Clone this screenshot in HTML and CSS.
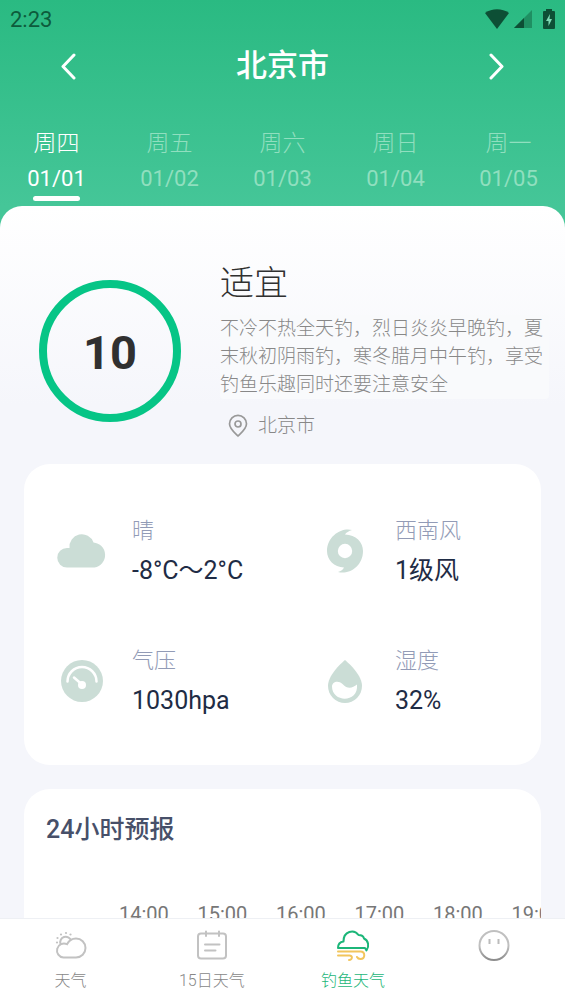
FILE: index.html
```html
<!DOCTYPE html>
<html lang="zh-CN">
<head>
<meta charset="utf-8">
<meta name="viewport" content="width=device-width, initial-scale=1">
<title>钓鱼天气</title>
<link rel="stylesheet" href="styles.css">
</head>
<body>
<div class="app">
  <header class="header">
    <div class="status">
      <span>2:23</span>
      <div class="status-icons">
        <svg width="24" height="20" viewBox="0 0 24 20"><path d="M0 4C7-1 17-1 24 4L12 20Z" fill="#0d4f35"/></svg>
        <svg width="18" height="18" viewBox="0 0 18 18"><path d="M18 0V18H0Z" fill="#1f8f62"/><path d="M10 8V18H0Z" fill="#0d4f35"/></svg>
        <svg class="battery" width="12" height="20" viewBox="0 0 12 20"><path d="M3 0h6v2h2q1 0 1 1v16q0 1-1 1H1q-1 0-1-1V3q0-1 1-1h2z" fill="#0d4f35"/><path d="M7 5L3 12h2.500v5L9 10H6.500z" fill="#7fd9b4"/></svg>
      </div>
    </div>
    <div class="city-bar">
      <button class="arrow" aria-label="上一个城市"><svg width="16" height="28" viewBox="0 0 16 28"><path d="M14 3L3 14.500L14 26"/></svg></button>
      <h1 class="city">北京市</h1>
      <button class="arrow" aria-label="下一个城市"><svg width="16" height="28" viewBox="0 0 16 28"><path d="M2 3L13 14.500L2 26"/></svg></button>
    </div>
    <nav class="days">
      <button class="day active"><span class="week">周四</span><span class="date">01/01</span></button>
      <button class="day"><span class="week">周五</span><span class="date">01/02</span></button>
      <button class="day"><span class="week">周六</span><span class="date">01/03</span></button>
      <button class="day"><span class="week">周日</span><span class="date">01/04</span></button>
      <button class="day"><span class="week">周一</span><span class="date">01/05</span></button>
    </nav>
  </header>

  <main class="sheet">
    <section class="summary">
      <div class="score">10</div>
      <div class="advice">
        <h2 class="advice-title">适宜</h2>
        <p class="advice-text">不冷不热全天钓，烈日炎炎早晚钓，夏末秋初阴雨钓，寒冬腊月中午钓，享受钓鱼乐趣同时还要注意安全</p>
        <div class="place">
          <svg width="20" height="24" viewBox="0 0 20 24" fill="none" stroke="#999" stroke-width="1.700"><path d="M10 22C7 19 1.500 15 1.500 9.800a8.500 8.500 0 0 1 17 0C18.500 15 13 19 10 22Z"/><circle cx="10" cy="10" r="3"/></svg>
          <span>北京市</span>
        </div>
      </div>
    </section>

    <section class="card metrics">
      <div class="metric">
        <svg width="52" height="52" viewBox="0 0 52 52"><path d="M11 42.500a9.700 9.700 0 0 1 0-19.500h2.500a12.400 12.400 0 0 1 24-5.500A12.600 12.600 0 0 1 38.500 42.500Z" fill="#cbddd6"/></svg>
        <dl><dt>晴</dt><dd>-8°C～2°C</dd></dl>
      </div>
      <div class="metric">
        <svg width="52" height="52" viewBox="0 0 52 52"><path d="M33 5C24 2 8 10 8 26c0 9 7 16 17 16.500-1 2-3 3.500-6 4.500C29 50 44 42 44 26 44 17 37 10 26 9.500c1-2 4-3.500 7-4.500Z" fill="#cbddd6"/><circle cx="26" cy="26" r="7.200" fill="#fff"/></svg>
        <dl><dt>西南风</dt><dd>1级风</dd></dl>
      </div>
      <div class="metric">
        <svg width="52" height="52" viewBox="0 0 52 52"><circle cx="26" cy="26" r="21" fill="#cbddd6"/><path d="M11.500 26.500a14.500 14.500 0 0 1 29 0" fill="none" stroke="#fff" stroke-width="2.500" stroke-linecap="round"/><path d="M18 22.500L26 29.500" stroke="#fff" stroke-width="2.500" stroke-linecap="round"/><circle cx="26" cy="30" r="4" fill="#fff"/></svg>
        <dl><dt>气压</dt><dd>1030hpa</dd></dl>
      </div>
      <div class="metric">
        <svg width="52" height="52" viewBox="0 0 52 52"><path d="M26 5C20 10 9 21 9 31a17 17 0 0 0 34 0C43 21 32 10 26 5Z" fill="#cbddd6"/><path d="M13 31.500c0-4.500 6-7 10.500-2.500 5.500 6 10 4 14.500.500C40 48 13 48 13 31.500Z" fill="#fff"/></svg>
        <dl><dt>湿度</dt><dd>32%</dd></dl>
      </div>
    </section>

    <section class="card forecast">
      <h2 class="forecast-title">24小时预报</h2>
      <div class="hours"><span>14:00</span><span>15:00</span><span>16:00</span><span>17:00</span><span>18:00</span><span>19:00</span></div>
    </section>
  </main>

  <nav class="tabbar">
    <a class="tab" href="#weather">
      <svg width="36" height="36" viewBox="0 0 36 36" fill="none" stroke="#c2c2c2" stroke-width="2"><path d="M10.500 30.500A7 7 0 1 1 14 17.200C16.500 12.500 20 11.500 23 11.500a9.500 9.500 0 0 1 0 19Z"/><path d="M7.500 17a5.300 5.300 0 0 1 10.500-3.500"/><g fill="#c2c2c2" stroke="none"><circle cx="4" cy="15.500" r="1.100"/><circle cx="4.500" cy="11" r="1.100"/><circle cx="8" cy="7.500" r="1.100"/><circle cx="13" cy="6" r="1.100"/><circle cx="17.500" cy="7.500" r="1.100"/></g></svg>
      <span>天气</span>
    </a>
    <a class="tab" href="#days">
      <svg width="36" height="36" viewBox="0 0 36 36" fill="none" stroke="#c2c2c2" stroke-width="2" stroke-linecap="round"><rect x="4" y="6.500" width="28" height="25" rx="3"/><path d="M12 4.500v4.500M25 4.500v4.500M11 17.500h14.500M11 23.500h10.500"/></svg>
      <span>15日天气</span>
    </a>
    <a class="tab active" href="#fishing">
      <svg width="36" height="36" viewBox="0 0 36 36" fill="none" stroke-width="2" stroke-linecap="round" stroke-linejoin="round"><path stroke="#1cb679" d="M31.500 23.500L30 21H3C3 17.500 5 15 8.500 14.500 8.500 4 19 2 23.500 8c3 0 5 1 5.500 3.500 4.500 2 5.500 8 2.500 12Z"/><path stroke="#f2c55c" d="M3 24.500h22.500c5 0 5 7.500 0 7.500-2 0-3-1-3.500-2M3 28.500h11.500c3.500 0 3 4.500-.500 4.500"/></svg>
      <span>钓鱼天气</span>
    </a>
    <a class="tab" href="#me" aria-label="我的">
      <svg width="36" height="36" viewBox="0 0 36 36" fill="none" stroke="#bbb" stroke-width="2"><defs><linearGradient id="face" x2="0" y2="1"><stop offset=".5" stop-color="#c0c0c0"/><stop offset="1" stop-color="#8c8c8c"/></linearGradient></defs><circle cx="18" cy="18.500" r="14.500" stroke="url(#face)"/><path d="M13.500 12v5M22.500 12v5"/></svg>
    </a>
  </nav>
</div>
</body>
</html>
```
FILE: styles.css
```css
* { box-sizing: border-box; }

body, h1, h2, p, dl, dd { margin: 0; }

body {
  font-family: Roboto, "Noto Sans CJK SC", sans-serif;
  background: #f5f6fb;
}

button {
  padding: 0;
  border: 0;
  background: none;
  font: inherit;
  color: inherit;
}

svg { display: block; flex: none; }

.app {
  display: flex;
  flex-direction: column;
  height: 100vh;
  background: linear-gradient(#2aba82, #45c698 206px);
}

.header { color: #fff; flex: none; }

.status {
  display: flex;
  justify-content: space-between;
  align-items: center;
  height: 38px;
  padding: 0 10px;
  font-size: 22px;
  font-weight: 400;
  color: #0d5b3c;
}

.status-icons { display: flex; align-items: center; gap: 5px; }
.battery { margin-left: 6px; }

.city-bar {
  display: flex;
  justify-content: space-between;
  align-items: center;
  height: 56px;
  padding: 0 60px;
}

.arrow svg {
  fill: none;
  stroke: #fff;
  stroke-width: 3;
  stroke-linecap: round;
  stroke-linejoin: round;
}

.city { font-size: 31px; font-weight: 500; line-height: 40px; }

.days {
  display: grid;
  grid-template-columns: repeat(5, 1fr);
  padding-top: 32px;
}

.day {
  display: flex;
  flex-direction: column;
  align-items: center;
  height: 80px;
  font-size: 23px;
  line-height: 35px;
  color: #90dfbf;
}

.week { font-weight: 300; }
.day .date { font-size: 22px; }
.day.active { color: #fff; }
.day.active::after {
  content: "";
  width: 47px;
  height: 5px;
  border-radius: 3px;
  background: #fff;
}

.sheet {
  flex: 1;
  min-height: 0;
  overflow: hidden;
  border-radius: 22px 22px 0 0;
  background: linear-gradient(#fff, #f5f6fb 200px);
}

.summary {
  display: grid;
  grid-template-columns: 181px 1fr;
  align-items: start;
  padding: 52px 16px 0 39px;
}

.score {
  display: grid;
  place-items: center;
  width: 142px;
  height: 142px;
  margin-top: 22px;
  padding-top: 3px;
  border: 8px solid #06c586;
  border-radius: 50%;
  font-size: 47px;
  font-weight: 700;
  color: #303030;
}

.advice-title {
  font-size: 34px;
  font-weight: 300;
  line-height: 50px;
  color: #303030;
}

.advice-text {
  margin-top: 7px;
  border-radius: 4px;
  background: #f9fafc;
  font-size: 19px;
  font-weight: 300;
  line-height: 28px;
  color: #888;
}

.place {
  display: flex;
  align-items: center;
  gap: 10px;
  margin-top: 13px;
  padding-left: 8px;
  font-size: 19px;
  font-weight: 300;
  line-height: 28px;
  color: #888;
}

.card {
  margin: 24px 24px 0;
  border-radius: 26px;
  background: #fff;
}

.metrics {
  display: grid;
  grid-template-columns: 263px 1fr;
  row-gap: 50px;
  padding: 47px 32px 44px;
}

.metric { display: flex; align-items: center; gap: 24px; }
.metric dt { font-size: 22px; font-weight: 300; line-height: 40px; color: #929bb6; }
.metric dd { font-size: 25px; line-height: 40px; color: #1f2c45; white-space: nowrap; }

.forecast { padding: 22px 0 60px 22px; overflow: hidden; }
.forecast-title {
  font-size: 25px;
  font-weight: 500;
  line-height: 38px;
  color: #475069;
}

.hours {
  display: grid;
  grid-auto-flow: column;
  grid-auto-columns: 18.6%;
  margin-top: 50px;
  padding-left: 73px;
  font-size: 20px;
  line-height: 30px;
  color: #777;
}

.tabbar {
  flex: none;
  display: grid;
  grid-template-columns: repeat(4, 1fr);
  height: 86px;
  border-top: 1px solid #eef0f4;
  background: #fff;
}

.tab {
  display: flex;
  flex-direction: column;
  align-items: center;
  gap: 6px;
  padding-top: 8px;
  font-size: 16px;
  font-weight: 300;
  line-height: 24px;
  color: #888;
  text-decoration: none;
}

.tab.active { color: #1cb679; }
```
